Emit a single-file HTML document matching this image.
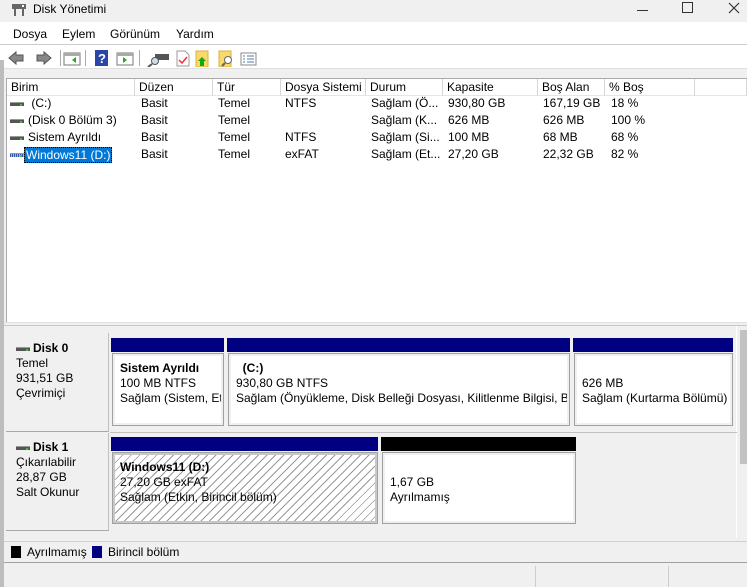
<!DOCTYPE html>
<html><head><meta charset="utf-8"><style>
*{margin:0;padding:0;box-sizing:border-box}
body{width:747px;height:587px;overflow:hidden;background:#f0f0f0;font-family:"Liberation Sans","DejaVu Sans",sans-serif;font-size:12px;color:#000;position:relative}
.a{position:absolute;white-space:nowrap}
.hd{position:absolute;top:79px;height:17px;border-right:1px solid #d6d6d6;background:#fff;padding-left:4px;line-height:16px;border-bottom:1px solid #e5e5e5}
.r{position:absolute;line-height:17px;height:17px;white-space:nowrap}
.pb{position:absolute;background:#000080}
.pbox{position:absolute;background:#fff;border:2px solid #f0f0f0;outline:1px solid #a0a0a0;padding:5px 5px;line-height:15px;white-space:nowrap;overflow:hidden}
.drv{display:inline-block;width:14px;height:4px;background:#555;border-top:1px solid #999;vertical-align:middle;margin-right:4px;position:relative}
.drv:after{content:"";position:absolute;right:2px;top:1px;width:2px;height:2px;background:#3c3}
</style></head><body>
<div class="a" style="left:0;top:0;width:747px;height:22px;background:#f0f0f0"></div>
<svg class="a" style="left:11px;top:3px" width="16" height="14"><rect x="1" y="1" width="14" height="5" fill="#666"/><rect x="3" y="6" width="2" height="7" fill="#666"/><rect x="11" y="6" width="2" height="7" fill="#666"/><rect x="11" y="2" width="2" height="2" fill="#fff"/></svg>
<div class="a" style="left:33px;top:2px;font-size:12px">Disk Yönetimi</div>
<div class="a" style="left:637px;top:10px;width:11px;height:1px;background:#333"></div>
<div class="a" style="left:682px;top:2px;width:11px;height:11px;border:1px solid #333"></div>
<svg class="a" style="left:728px;top:2px" width="12" height="12"><path d="M1 1L11 11M11 1L1 11" stroke="#333" stroke-width="1.2"/></svg>
<div class="a" style="left:0;top:22px;width:747px;height:46px;background:#fff"></div>
<div class="a" style="left:13px;top:27px">Dosya</div>
<div class="a" style="left:62px;top:27px">Eylem</div>
<div class="a" style="left:110px;top:27px">Görünüm</div>
<div class="a" style="left:176px;top:27px">Yardım</div>
<div class="a" style="left:0;top:44px;width:747px;height:1px;background:#ccc"></div>
<svg class="a" style="left:6px;top:49px" width="260" height="18">
<path d="M3 9L10 3V6H17V12H10V15Z" fill="#888" stroke="#555"/>
<path d="M45 9L38 3V6H31V12H38V15Z" fill="#888" stroke="#555"/>
<rect x="54" y="1" width="1" height="16" fill="#aaa"/>
<rect x="58" y="4" width="16" height="12" fill="#fff" stroke="#777"/><rect x="58" y="4" width="16" height="3" fill="#aaa"/><path d="M70 8L66 11L70 14Z" fill="#2a2"/>
<rect x="79" y="1" width="1" height="16" fill="#aaa"/>
<rect x="89" y="1" width="13" height="16" fill="#2a46a8"/><text x="92" y="14" fill="#fff" font-size="13" font-weight="bold" font-family="Liberation Sans">?</text>
<rect x="111" y="4" width="16" height="12" fill="#fff" stroke="#777"/><rect x="111" y="4" width="16" height="3" fill="#aaa"/><path d="M117 8L121 11L117 14Z" fill="#2a2"/>
<rect x="133" y="1" width="1" height="16" fill="#aaa"/>
<rect x="149" y="5" width="14" height="6" fill="#555"/><circle cx="149" cy="12" r="3.5" fill="#cde" stroke="#555"/><path d="M146 15L142 18" stroke="#555" stroke-width="2"/>
<path d="M171 2H179L183 6V17H171Z" fill="#fff" stroke="#999"/><path d="M173 11L176 14L181 8" stroke="#e33" stroke-width="1.5" fill="none"/>
<rect x="190" y="2" width="12" height="16" fill="#f9d96b" stroke="#d9b040"/><path d="M196 8L200 12H198V17H194V12H192Z" fill="#1a1"/>
<rect x="213" y="2" width="12" height="16" fill="#f9d96b" stroke="#d9b040"/><circle cx="222" cy="11" r="3.5" fill="#fff" stroke="#666"/><path d="M219 14L216 17" stroke="#666" stroke-width="2"/>
<rect x="235" y="4" width="15" height="12" fill="#fff" stroke="#888"/><path d="M237 7H239M241 7H248M237 10H239M241 10H248M237 13H239M241 13H248" stroke="#57a"/>
</svg>
<div class="a" style="left:0;top:68px;width:747px;height:1px;background:#e0e0e0"></div>
<div class="a" style="left:0;top:60px;width:4px;height:527px;background:#bdbdbd"></div>
<div class="a" style="left:6px;top:78px;width:741px;height:244px;background:#fff;border-top:1px solid #aaa;border-left:1px solid #aaa"></div>
<div class="hd" style="left:7px;width:128px">Birim</div>
<div class="hd" style="left:135px;width:78px">Düzen</div>
<div class="hd" style="left:213px;width:68px">Tür</div>
<div class="hd" style="left:281px;width:85px">Dosya Sistemi</div>
<div class="hd" style="left:366px;width:77px">Durum</div>
<div class="hd" style="left:443px;width:95px">Kapasite</div>
<div class="hd" style="left:538px;width:67px">Boş Alan</div>
<div class="hd" style="left:605px;width:90px">% Boş</div>
<div class="hd" style="left:695px;width:52px"></div>
<div class="r" style="left:10px;top:95px"><span class="drv"></span> (C:)</div>
<div class="r" style="left:10px;top:112px"><span class="drv"></span>(Disk 0 Bölüm 3)</div>
<div class="r" style="left:10px;top:129px"><span class="drv"></span>Sistem Ayrıldı</div>
<div class="r" style="left:10px;top:146px"><span class="drv" style="background:repeating-linear-gradient(90deg,#35a 0 1px,#9bd 1px 2px)"></span></div>
<div class="r" style="left:24px;top:147px;height:16px;line-height:14px;background:#0078d7;color:#fff;border:1px dotted #000;padding:0 1px">Windows11 (D:)</div>
<div class="r" style="left:141px;top:95px;height:70px">Basit<br>Basit<br>Basit<br>Basit</div>
<div class="r" style="left:218px;top:95px;height:70px">Temel<br>Temel<br>Temel<br>Temel</div>
<div class="r" style="left:285px;top:95px;height:70px">NTFS<br><br>NTFS<br>exFAT</div>
<div class="r" style="left:371px;top:95px;height:70px">Sağlam (Ö...<br>Sağlam (K...<br>Sağlam (Si...<br>Sağlam (Et...</div>
<div class="r" style="left:448px;top:95px;height:70px">930,80 GB<br>626 MB<br>100 MB<br>27,20 GB</div>
<div class="r" style="left:543px;top:95px;height:70px">167,19 GB<br>626 MB<br>68 MB<br>22,32 GB</div>
<div class="r" style="left:611px;top:95px;height:70px">18 %<br>100 %<br>68 %<br>82 %</div>
<div class="a" style="left:4px;top:322px;width:743px;height:4px;background:#f0f0f0;border-bottom:1px solid #c8c8c8;border-top:1px solid #e0e0e0"></div>
<div class="a" style="left:6px;top:326px;width:741px;height:213px;background:#f0f0f0"></div>
<div class="a" style="left:740px;top:330px;width:7px;height:134px;background:#c2c2c2"></div>
<div class="a" style="left:736px;top:326px;width:1px;height:212px;background:#fff"></div>
<div class="a" style="left:6px;top:333px;width:103px;height:99px;border-right:1px solid #c0c0c0;border-bottom:1px solid #a8a8a8;line-height:15px;padding:8px 0 0 10px">
<b><span class="drv" style="margin-right:3px"></span>Disk 0</b><br>Temel<br>931,51 GB<br>Çevrimiçi</div>
<div class="a" style="left:6px;top:433px;width:103px;height:98px;border-right:1px solid #c0c0c0;border-bottom:1px solid #a8a8a8;line-height:15px;padding:7px 0 0 10px">
<b><span class="drv" style="margin-right:3px"></span>Disk 1</b><br>Çıkarılabilir<br>28,87 GB<br>Salt Okunur</div>
<div class="a" style="left:110px;top:432px;width:627px;height:1px;background:#c0c0c0"></div>
<div class="pb" style="left:111px;top:338px;width:113px;height:14px"></div>
<div class="pb" style="left:227px;top:338px;width:343px;height:14px"></div>
<div class="pb" style="left:573px;top:338px;width:160px;height:14px"></div>
<div class="pbox" style="left:113px;top:354px;width:110px;height:71px"><b>Sistem Ayrıldı</b><br>100 MB NTFS<br>Sağlam (Sistem, Etkin</div>
<div class="pbox" style="left:229px;top:354px;width:340px;height:71px">&nbsp;&nbsp;<b>(C:)</b><br>930,80 GB NTFS<br>Sağlam (Önyükleme, Disk Belleği Dosyası, Kilitlenme Bilgisi, Bir</div>
<div class="pbox" style="left:575px;top:354px;width:157px;height:71px"><br>626 MB<br>Sağlam (Kurtarma Bölümü)</div>
<div class="pb" style="left:111px;top:437px;width:267px;height:14px"></div>
<div class="pb" style="left:381px;top:437px;width:195px;height:14px;background:#000"></div>
<div class="pbox" style="left:113px;top:453px;width:264px;height:70px;border-color:#c8c8c8;background:repeating-linear-gradient(135deg,#fff 0 5px,#999 5px 6px)"><b>Windows11 (D:)</b><br>27,20 GB exFAT<br>Sağlam (Etkin, Birincil bölüm)</div>
<div class="pbox" style="left:383px;top:453px;width:192px;height:70px"><br>1,67 GB<br>Ayrılmamış</div>
<div class="a" style="left:4px;top:541px;width:743px;height:1px;background:#d0d0d0"></div>
<div class="a" style="left:11px;top:546px;width:10px;height:12px;background:#000"></div>
<div class="a" style="left:27px;top:545px">Ayrılmamış</div>
<div class="a" style="left:92px;top:546px;width:10px;height:12px;background:#000080"></div>
<div class="a" style="left:108px;top:545px">Birincil bölüm</div>
<div class="a" style="left:4px;top:562px;width:743px;height:1px;background:#a0a0a0"></div>
<div class="a" style="left:4px;top:563px;width:743px;height:24px;background:#f0f0f0"></div>
<div class="a" style="left:535px;top:566px;width:1px;height:21px;background:#ccc"></div>
<div class="a" style="left:668px;top:566px;width:1px;height:21px;background:#ccc"></div>
</body></html>
